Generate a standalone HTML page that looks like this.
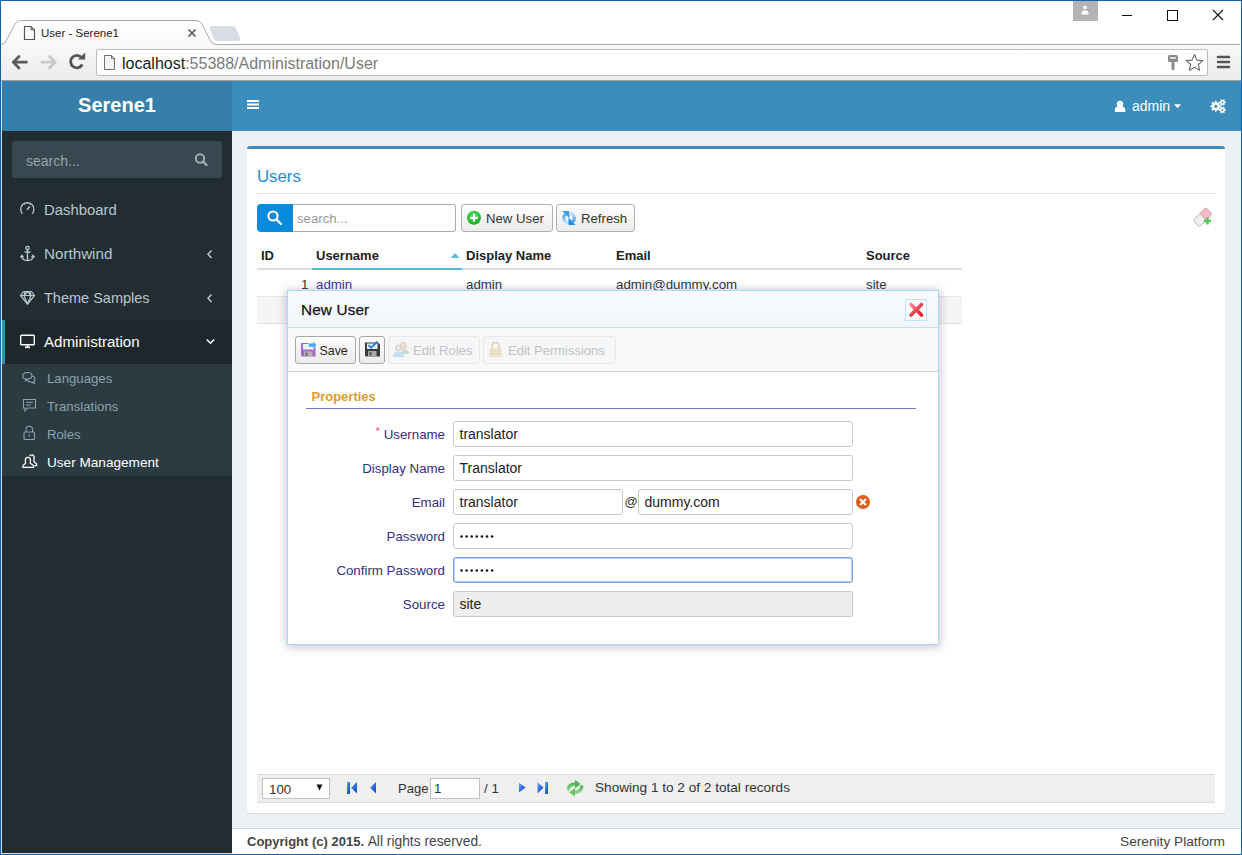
<!DOCTYPE html>
<html><head><meta charset="utf-8">
<style>
*{box-sizing:border-box;margin:0;padding:0}
html,body{width:1242px;height:855px;overflow:hidden;background:#0e64b4;font-family:"Liberation Sans",sans-serif;font-size:13px;color:#333}
.a{position:absolute}
.t{position:absolute;white-space:nowrap;line-height:1}
svg{position:absolute;overflow:visible}
/* chrome */
#tabstrip{left:1px;top:1px;width:1240px;height:44px;background:#fff}
#toolbar{left:1px;top:45px;width:1240px;height:36px;background:linear-gradient(#f8f8f8,#ececec);border-bottom:1px solid #a49f9a}
#addr{left:95px;top:4px;width:1112px;height:27px;background:#fff;border:1px solid #bdbdbd;border-radius:2px}
/* app */
#hdr-logo{left:2px;top:81px;width:230px;height:50px;background:#367fa9}
#hdr-nav{left:232px;top:81px;width:1009px;height:50px;background:#3c8dbc}
#side{left:2px;top:131px;width:230px;height:722px;background:#222d32}
#content{left:232px;top:131px;width:1009px;height:697px;background:#ecf0f5}
#footer{left:232px;top:828px;width:1009px;height:26px;background:#fff;border-top:1px solid #d2d6de}
</style></head>
<body>
<!-- ================= BROWSER CHROME ================= -->
<div id="tabstrip" class="a"></div>
<div id="toolbar" class="a"><div id="addr" class="a"></div></div>
<svg style="left:0;top:0" width="1242" height="46"><defs><linearGradient id="tabg" x1="0" y1="0" x2="0" y2="1"><stop offset="0" stop-color="#ffffff"/><stop offset="1" stop-color="#f8f8f8"/></linearGradient></defs>
  <path d="M1.5 44.5 Q5 44.5 7 39 L15 24 Q17 20.5 21 20.5 L196 20.5 Q200 20.5 202 24 L210 40 Q212 44.5 216 44.5 L1240 44.5" fill="url(#tabg)" stroke="#a8a8a8" stroke-width="1"/>
  <path d="M212 26 L232 26 Q235 26 236 28 L240 38 Q241 41 238 41 L218 41 Q215 41 214 39 L210 29 Q209 26 212 26Z" fill="#d8dde5"/>
  <path d="M24.5 26.5 L31 26.5 L34.5 30 L34.5 39.5 L24.5 39.5 Z" fill="#fff" stroke="#555" stroke-width="1.2"/>
  <path d="M31 26.5 L31 30 L34.5 30" fill="none" stroke="#555" stroke-width="1"/>
  <path d="M188.5 29.5 L195.5 36.5 M195.5 29.5 L188.5 36.5" stroke="#555" stroke-width="1.6"/>
  <rect x="1073" y="1" width="25" height="20" fill="#b3b3b3"/>
  <circle cx="1085" cy="7.3" r="1.9" fill="#fff"/>
  <path d="M1081.3 14.5 Q1081.3 10.3 1085 10.3 Q1088.7 10.3 1088.7 14.5Z" fill="#fff"/>
  <path d="M1122 15.5 L1132 15.5" stroke="#111" stroke-width="1"/>
  <rect x="1167.5" y="10.5" width="10" height="10" fill="none" stroke="#111" stroke-width="1"/>
  <path d="M1213 10 L1223 20 M1223 10 L1213 20" stroke="#111" stroke-width="1.1"/>
</svg>
<div class="t" style="left:41px;top:28px;font-size:11.5px;color:#222">User - Serene1</div>
<svg style="left:0;top:44px" width="1242" height="37">
  <!-- back -->
  <path d="M26.5 18.2 L14 18.2 M19 12.5 L13.3 18.2 L19 23.9" fill="none" stroke="#5a5a5a" stroke-width="2.8" stroke-linecap="round" stroke-linejoin="round"/>
  <!-- forward -->
  <path d="M42 18.2 L54.5 18.2 M49.5 12.5 L55.2 18.2 L49.5 23.9" fill="none" stroke="#c9c9c9" stroke-width="2.8" stroke-linecap="round" stroke-linejoin="round"/>
  <!-- reload -->
  <path d="M82.3 20.5 A6.2 6.2 0 1 1 81.5 13.5" fill="none" stroke="#555" stroke-width="2.8"/>
  <path d="M78 15.5 L85.2 15.5 L85.2 8.5 Z" fill="#555"/>
  <!-- page icon -->
  <path d="M104.5 11.5 L111.5 11.5 L114.5 14.5 L114.5 25.5 L104.5 25.5 Z" fill="#f4f4f4" stroke="#707070" stroke-width="1"/>
  <path d="M111.5 11.5 L111.5 14.5 L114.5 14.5" fill="none" stroke="#707070" stroke-width="1"/>
  <!-- key -->
  <rect x="1168" y="11" width="10" height="7" rx="1.5" fill="#8c8c8c"/>
  <rect x="1170" y="13" width="6" height="2" fill="#ddd"/>
  <rect x="1171.5" y="17" width="3" height="9" rx="1" fill="#8c8c8c"/>
  <!-- star -->
  <path d="M1194.5 10.5 L1196.9 16.1 L1202.9 16.6 L1198.3 20.5 L1199.7 26.4 L1194.5 23.3 L1189.3 26.4 L1190.7 20.5 L1186.1 16.6 L1192.1 16.1 Z" fill="#fff" stroke="#6a6a6a" stroke-width="1.1" stroke-linejoin="round"/>
  <!-- menu -->
  <path d="M1218 13 L1229 13 M1218 18 L1229 18 M1218 23 L1229 23" stroke="#555" stroke-width="2.6" stroke-linecap="round"/>
</svg>
<div class="t" style="left:122px;top:55.5px;font-size:16px;color:#1a1a1a">localhost<span style="color:#7a7a7a">:55388/Administration/User</span></div>

<!-- ================= HEADER ================= -->
<div class="a" style="left:1px;top:81px;width:1px;height:773px;background:#dcdcdc"></div><div class="a" style="left:1px;top:853px;width:231px;height:1px;background:#dcdcdc"></div>
<div id="hdr-logo" class="a"></div>
<div id="hdr-nav" class="a"></div>
<div class="t" style="left:2px;width:230px;text-align:center;top:95.2px;font-size:20px;font-weight:bold;color:#fff">Serene1</div>
<svg style="left:0;top:0" width="1242" height="131">
  <rect x="247" y="100" width="12" height="2" fill="#fff"/>
  <rect x="247" y="103.5" width="12" height="2" fill="#fff"/>
  <rect x="247" y="107" width="12" height="2" fill="#fff"/>
  <!-- user -->
  <circle cx="1120" cy="104" r="3.2" fill="#fff"/>
  <path d="M1114.8 112 L1114.8 110 Q1115 107 1118 106.6 L1122 106.6 Q1125 107 1125.3 110 L1125.3 112 Z" fill="#fff"/>
  <path d="M1174 104.3 L1181 104.3 L1177.5 108.3 Z" fill="#fff"/>
  <!-- gears -->
  <g fill="#fff" fill-rule="evenodd"><path d="M1219.80 105.42 L1221.35 105.53 L1221.35 107.07 L1219.80 107.18 L1219.25 108.51 L1220.26 109.68 L1219.18 110.76 L1218.01 109.75 L1216.68 110.30 L1216.57 111.85 L1215.03 111.85 L1214.92 110.30 L1213.59 109.75 L1212.42 110.76 L1211.34 109.68 L1212.35 108.51 L1211.80 107.18 L1210.25 107.07 L1210.25 105.53 L1211.80 105.42 L1212.35 104.09 L1211.34 102.92 L1212.42 101.84 L1213.59 102.85 L1214.92 102.30 L1215.03 100.75 L1216.57 100.75 L1216.68 102.30 L1218.01 102.85 L1219.18 101.84 L1220.26 102.92 L1219.25 104.09Z M1217.40 106.30 A1.6 1.6 0 1 0 1214.20 106.30 A1.6 1.6 0 1 0 1217.40 106.30Z"/><path d="M1224.90 101.69 L1225.94 101.76 L1225.94 103.04 L1224.90 103.11 L1224.31 104.12 L1224.77 105.06 L1223.67 105.70 L1223.08 104.83 L1221.92 104.83 L1221.33 105.70 L1220.23 105.06 L1220.69 104.12 L1220.10 103.11 L1219.06 103.04 L1219.06 101.76 L1220.10 101.69 L1220.69 100.68 L1220.23 99.74 L1221.33 99.10 L1221.92 99.97 L1223.08 99.97 L1223.67 99.10 L1224.77 99.74 L1224.31 100.68Z M1223.40 102.40 A0.9 0.9 0 1 0 1221.60 102.40 A0.9 0.9 0 1 0 1223.40 102.40Z"/><path d="M1224.90 109.29 L1225.94 109.36 L1225.94 110.64 L1224.90 110.71 L1224.31 111.72 L1224.77 112.66 L1223.67 113.30 L1223.08 112.43 L1221.92 112.43 L1221.33 113.30 L1220.23 112.66 L1220.69 111.72 L1220.10 110.71 L1219.06 110.64 L1219.06 109.36 L1220.10 109.29 L1220.69 108.28 L1220.23 107.34 L1221.33 106.70 L1221.92 107.57 L1223.08 107.57 L1223.67 106.70 L1224.77 107.34 L1224.31 108.28Z M1223.40 110.00 A0.9 0.9 0 1 0 1221.60 110.00 A0.9 0.9 0 1 0 1223.40 110.00Z"/></g>
</svg>
<div class="t" style="left:1132px;top:99.3px;font-size:14px;color:#fff">admin</div>

<!-- ================= SIDEBAR ================= -->
<div id="side" class="a"></div>
<div class="a" style="left:12px;top:141px;width:210px;height:37px;background:#374850;border-radius:3px"></div>
<div class="t" style="left:26px;top:153.5px;font-size:14px;color:#97a3a8">search...</div>
<svg style="left:0;top:0" width="232" height="860">
  <!-- search magnifier -->
  <circle cx="200" cy="158.5" r="4.2" fill="none" stroke="#a3acb0" stroke-width="2"/>
  <path d="M203 161.5 L206.5 165" stroke="#a3acb0" stroke-width="2.4" stroke-linecap="round"/>
  <!-- active item -->
  <rect x="2" y="320" width="230" height="44" fill="#1e282c"/>
  <rect x="2" y="320" width="3" height="44" fill="#3c8dbc"/>
  <rect x="2" y="364" width="230" height="112" fill="#2c3b41"/>
  <!-- dashboard icon -->
  <g fill="none" stroke="#b8c7ce" stroke-width="1.3">
    <path d="M22.5 213.8 A6.6 6.6 0 1 1 32.1 213.8"/>
    <path d="M26.8 209.8 L30 206.5" stroke-width="1.5"/>
    <path d="M24.5 204.3 L25 205 M27.3 203 L27.3 204 M30.1 204.3 L29.6 205" stroke-width="1"/>
  </g>
  <!-- anchor -->
  <g fill="none" stroke="#b8c7ce" stroke-width="1.4">
    <circle cx="27.5" cy="248" r="1.6"/>
    <path d="M27.5 249.6 L27.5 260.5"/>
    <path d="M24.5 252 L30.5 252"/>
    <path d="M21.5 256 Q22 260.5 27.5 260.5 Q33 260.5 33.5 256"/>
    <path d="M20.5 257.5 L22 255.5 L23.5 257.5"/>
    <path d="M31.5 257.5 L33 255.5 L34.5 257.5"/>
  </g>
  <!-- diamond -->
  <g fill="none" stroke="#b8c7ce" stroke-width="1.2" stroke-linejoin="round">
    <path d="M23.5 291.5 L31.5 291.5 L34.5 295.5 L27.5 304 L20.5 295.5 Z"/>
    <path d="M20.5 295.5 L34.5 295.5 M25 291.5 L24 295.5 L27.5 304 L31 295.5 L30 291.5 M24 295.5 L27.5 291.5 L31 295.5"/>
  </g>
  <!-- chevrons -->
  <path d="M211.5 250.5 L208 254.3 L211.5 258" fill="none" stroke="#b8c7ce" stroke-width="1.5"/>
  <path d="M211.5 294.5 L208 298.3 L211.5 302" fill="none" stroke="#b8c7ce" stroke-width="1.5"/>
  <path d="M206.8 339.5 L210.5 343.2 L214.2 339.5" fill="none" stroke="#fff" stroke-width="1.6"/>
  <!-- desktop -->
  <rect x="20.7" y="335.2" width="13.6" height="9.6" rx="0.8" fill="none" stroke="#fff" stroke-width="1.4"/>
  <path d="M25 347.3 L30 347.3" stroke="#fff" stroke-width="1.6"/>
  <path d="M27.5 345 L27.5 347" stroke="#fff" stroke-width="1.6"/>
  <!-- comments -->
  <g fill="none" stroke="#8aa4af" stroke-width="1.1">
    <path d="M26 379 Q22.8 379 22.8 376 Q22.8 372.5 27.5 372.5 Q32 372.5 32 375.5 Q32 378.5 28 378.7 L25.5 380.5 Z"/>
    <path d="M32.5 376 Q35 376.8 35 379 Q35 381 33.5 381.5 L34.5 383.5 L31 382 Q28 382 27.5 380"/>
  </g>
  <!-- commenting -->
  <g fill="none" stroke="#8aa4af" stroke-width="1.1">
    <path d="M23.5 399.5 L35.5 399.5 L35.5 408 L27.5 408 L25 410.8 L25 408 L23.5 408 Z"/>
    <path d="M26 402.3 L33 402.3 M26 405 L31 405" stroke-width="1"/>
  </g>
  <!-- lock -->
  <g fill="none" stroke="#8aa4af" stroke-width="1.1">
    <rect x="24" y="432" width="10.5" height="7.5" rx="1"/>
    <path d="M26 432 L26 429.5 Q26 426.3 29.2 426.3 Q32.5 426.3 32.5 429.5 L32.5 432"/>
    <path d="M29.2 434.5 L29.2 436.5"/>
  </g>
  <!-- user mgmt -->
  <g fill="none" stroke="#fff" stroke-width="1.25" stroke-linejoin="round">
    <path d="M25.6 463.3 L25.3 460.5 Q25.3 457.4 27.9 457.4 Q30.5 457.4 30.5 460.5 L30.2 463.3 L33.2 465.3 Q33.8 465.8 33.7 467.3 L22.8 467.3 Q22.7 465.8 23.3 465.3 Z"/>
    <path d="M29.6 456.2 Q30.2 454.9 31.6 454.9 Q34.2 454.9 34.2 458 L33.8 461.6 L36.2 463.6 Q36.8 464.1 36.7 465.6 L34.6 465.6"/>
  </g>
</svg>
<div class="t" style="left:44px;top:202.5px;font-size:14.9px;color:#b8c7ce">Dashboard</div>
<div class="t" style="left:44px;top:246.3px;font-size:15.2px;color:#b8c7ce">Northwind</div>
<div class="t" style="left:44px;top:290.7px;font-size:14.5px;color:#b8c7ce">Theme Samples</div>
<div class="t" style="left:44px;top:334.3px;font-size:15.1px;color:#fff">Administration</div>
<div class="t" style="left:47px;top:372.3px;font-size:13.2px;color:#8aa4af">Languages</div>
<div class="t" style="left:47px;top:400.3px;font-size:13.2px;color:#8aa4af">Translations</div>
<div class="t" style="left:47px;top:428.3px;font-size:13.2px;color:#8aa4af">Roles</div>
<div class="t" style="left:47px;top:456.3px;font-size:13.6px;color:#fff">User Management</div>

<!-- ================= CONTENT ================= -->
<div id="content" class="a"></div>
<div id="footer" class="a"></div>
<div class="a" style="left:247px;top:146px;width:978px;height:667px;background:#fff;border-top:3px solid #3c8dbc;border-radius:3px;box-shadow:0 1px 1px rgba(0,0,0,0.1)"></div>
<div class="t" style="left:257px;top:168.5px;font-size:16.8px;color:#1f8dd6">Users</div>
<div class="a" style="left:257px;top:193px;width:958px;height:1px;background:#e3e3e3"></div>
<!-- quick search -->
<div class="a" style="left:257px;top:204px;width:36px;height:28px;background:#098bdb;border-radius:4px 0 0 4px"></div>
<svg style="left:0;top:0" width="1242" height="260">
  <circle cx="273" cy="216" r="4.6" fill="none" stroke="#fff" stroke-width="2"/>
  <path d="M276.5 219.5 L281 224" stroke="#fff" stroke-width="2.4" stroke-linecap="round"/>
</svg>
<div class="a" style="left:293px;top:204px;width:163px;height:28px;background:#fff;border:1px solid #a9a9a9;border-left:none;border-radius:0 3px 3px 0"></div>
<div class="t" style="left:297px;top:212px;font-size:13.2px;color:#999">search...</div>
<!-- buttons -->
<div class="a" style="left:461px;top:204px;width:92px;height:28px;background:linear-gradient(#fdfdfd,#ececec);border:1px solid #b0b0b0;border-radius:3px"></div>
<div class="t" style="left:486px;top:212px;font-size:13.2px;color:#333">New User</div>
<div class="a" style="left:556px;top:204px;width:79px;height:28px;background:linear-gradient(#fdfdfd,#ececec);border:1px solid #b0b0b0;border-radius:3px"></div>
<div class="t" style="left:581px;top:212px;font-size:13.2px;color:#333">Refresh</div>
<svg style="left:0;top:0" width="1242" height="260">
  <defs>
    <radialGradient id="gg" cx="0.45" cy="0.3" r="0.75"><stop offset="0" stop-color="#4ee05a"/><stop offset="1" stop-color="#12a822"/></radialGradient>
    <linearGradient id="rb1" x1="0" y1="0" x2="0" y2="1"><stop offset="0" stop-color="#4aa2e8"/><stop offset="1" stop-color="#c4e4fa"/></linearGradient><linearGradient id="rb2" x1="0" y1="0" x2="0" y2="1"><stop offset="0" stop-color="#c4e4fa"/><stop offset="1" stop-color="#3a9ae8"/></linearGradient>
  </defs>
  <circle cx="474" cy="217.8" r="7" fill="url(#gg)"/>
  <path d="M474 213.8 L474 221.8 M470 217.8 L478 217.8" stroke="#fff" stroke-width="2.2"/>
  <!-- refresh icon -->
  <path d="M569 223.2 A5.2 5.2 0 0 1 565.3 214.3" fill="none" stroke="url(#rb1)" stroke-width="3"/>
  <path d="M562.3 211 L569.5 211 L569.5 218.2 Z" fill="#3d9ae6"/>
  <path d="M569 212.8 A5.2 5.2 0 0 1 572.7 221.7" fill="none" stroke="url(#rb2)" stroke-width="3"/>
  <path d="M568.5 217.8 L568.5 225 L575.7 225 Z" fill="#1d8fe8"/>
  <!-- eraser -->
  <g transform="translate(0 0.8) rotate(-45 1203 216)">
    <rect x="1193.5" y="211.5" width="11" height="9" rx="2" fill="#f0f0f0" stroke="#c4c4c4" stroke-width="1"/>
    <rect x="1203" y="211.5" width="8.5" height="9" rx="2" fill="#f3bccb" stroke="#e6a2b6" stroke-width="1"/>
  </g>
  <path d="M1207.5 217.5 L1207.5 224.5 M1204 221 L1211 221" stroke="#4cc94c" stroke-width="2.4"/>
</svg>

<!-- grid -->
<div class="a" style="left:257px;top:268px;width:705px;height:2px;background:#dddddd"></div>
<div class="a" style="left:312px;top:268px;width:150px;height:2px;background:#52b9dd"></div>
<svg style="left:0;top:0" width="1242" height="300"><path d="M450.5 258 L455 253 L459.5 258 Z" fill="#5bbfe0"/></svg>
<div class="t" style="left:261px;top:249px;font-size:13px;font-weight:bold;color:#222">ID</div>
<div class="t" style="left:316px;top:249px;font-size:13px;font-weight:bold;color:#222">Username</div>
<div class="t" style="left:466px;top:249px;font-size:13px;font-weight:bold;color:#222">Display Name</div>
<div class="t" style="left:616px;top:249px;font-size:13px;font-weight:bold;color:#222">Email</div>
<div class="t" style="left:866px;top:249px;font-size:13px;font-weight:bold;color:#222">Source</div>
<div class="a" style="left:257px;top:296px;width:705px;height:1px;background:#e6e6e6"></div>
<div class="a" style="left:257px;top:297px;width:705px;height:27px;background:#f5f5f5;border-bottom:1px solid #e0e0e0"></div>
<div class="t" style="left:301px;top:277.5px;font-size:13.3px;color:#333">1</div>
<div class="t" style="left:316px;top:277.5px;font-size:13.3px;color:#3535b0">admin</div>
<div class="t" style="left:466px;top:277.5px;font-size:13.3px;color:#333">admin</div>
<div class="t" style="left:616px;top:277.5px;font-size:13.3px;color:#333">admin@dummy.com</div>
<div class="t" style="left:866px;top:277.5px;font-size:13.3px;color:#333">site</div>

<!-- pager -->
<div class="a" style="left:257px;top:774px;width:958px;height:29px;background:#efefef;border-top:1px solid #dcdcdc;border-bottom:1px solid #dcdcdc"></div>
<div class="a" style="left:262px;top:778px;width:68px;height:21px;background:#fff;border:1px solid #c0c0c0"></div>
<div class="t" style="left:269px;top:783px;font-size:13.3px;color:#333">100</div>
<svg style="left:0;top:0" width="1242" height="855">
  <path d="M316.5 784.5 L322.5 784.5 L319.5 790.5 Z" fill="#111"/>
  <defs><linearGradient id="pg" x1="0" y1="0" x2="1" y2="1"><stop offset="0" stop-color="#7fb0f5"/><stop offset="0.5" stop-color="#2d6ee0"/><stop offset="1" stop-color="#1a48b8"/></linearGradient></defs>
  <!-- first -->
  <rect x="347" y="782" width="3" height="12" fill="url(#pg)"/>
  <path d="M357 782 L357 793.5 L351 787.8 Z" fill="url(#pg)"/>
  <!-- prev -->
  <path d="M376 782 L376 793.5 L370 787.8 Z" fill="url(#pg)"/>
  <!-- next -->
  <path d="M519 782.5 L519 792.5 L525.5 787.5 Z" fill="url(#pg)"/>
  <!-- last -->
  <path d="M537.5 782 L537.5 793.5 L543.5 787.8 Z" fill="url(#pg)"/>
  <rect x="545" y="782" width="3" height="12" fill="url(#pg)"/>
  <!-- green refresh -->
  <defs><linearGradient id="gr" x1="0" y1="0" x2="0" y2="1"><stop offset="0" stop-color="#5cb85c"/><stop offset="1" stop-color="#8fd08f"/></linearGradient></defs>
  <path d="M568.3 789.2 Q568.8 784 575.5 784" fill="none" stroke="url(#gr)" stroke-width="3.4" stroke-linecap="round"/>
  <path d="M575 779.8 L580.8 784.1 L575 788.4 Z" fill="#58b058"/>
  <path d="M581.7 786.6 Q581.2 792.2 574.5 792.2" fill="none" stroke="url(#gr)" stroke-width="3.4" stroke-linecap="round"/>
  <path d="M575 788 L569.2 792.3 L575 796.6 Z" fill="#6cc06c"/>
</svg>
<div class="t" style="left:398px;top:782px;font-size:13px;color:#333">Page</div>
<div class="a" style="left:430px;top:778px;width:50px;height:21px;background:#fff;border:1px solid #c0c0c0"></div>
<div class="t" style="left:434px;top:782px;font-size:13.3px;color:#333">1</div>
<div class="t" style="left:484px;top:782px;font-size:13.3px;color:#333">/ 1</div>
<div class="t" style="left:595px;top:781px;font-size:13.6px;color:#333">Showing 1 to 2 of 2 total records</div>

<!-- footer -->
<div class="t" style="left:247px;top:834.5px;font-size:13px;color:#444"><b>Copyright (c) 2015.</b> <span style="font-size:13.8px">All rights reserved.</span></div>
<div class="t" style="left:1000px;width:225px;text-align:right;top:834.5px;font-size:13.7px;color:#444">Serenity Platform</div>

<!-- ================= DIALOG ================= -->
<div class="a" style="left:287px;top:290px;width:652px;height:355px;background:#fff;border:1px solid #a8d9f5;box-shadow:0 1px 9px 1px rgba(80,70,120,0.33)"></div>
<div class="a" style="left:288px;top:291px;width:650px;height:37px;background:linear-gradient(#fafcfe,#f0f6fb);border-bottom:1px solid #b9e0f6"></div>
<div class="t" style="left:301px;top:301.7px;font-size:15.3px;color:#111;letter-spacing:0.15px;-webkit-text-stroke:0.25px #111">New User</div>
<div class="a" style="left:905px;top:299px;width:22px;height:22px;border:1px solid #bde3f7;background:#f7fbfe"></div>
<svg style="left:0;top:0" width="1242" height="855">
  <defs>
    <linearGradient id="xr" x1="0" y1="0" x2="1" y2="1"><stop offset="0" stop-color="#ff8a94"/><stop offset="0.5" stop-color="#f04452"/><stop offset="1" stop-color="#e81c2a"/></linearGradient>
  </defs>
  <path d="M911 304.5 L921.5 315 M921.5 304.5 L911 315" stroke="url(#xr)" stroke-width="3.6" stroke-linecap="round"/>
</svg>
<!-- dialog toolbar -->
<div class="a" style="left:288px;top:328px;width:650px;height:44px;background:#f7f9fb;border-bottom:1px solid #cfcfcf"></div>
<div class="a" style="left:295px;top:336px;width:61px;height:28px;background:linear-gradient(#fdfdfd,#ebebeb);border:1px solid #a8a8a8;border-radius:3px"></div>
<div class="a" style="left:359px;top:336px;width:26px;height:28px;background:linear-gradient(#fdfdfd,#ebebeb);border:1px solid #a8a8a8;border-radius:3px"></div>
<div class="a" style="left:388px;top:336px;width:92px;height:28px;background:#f4f6f8;border:1px solid #e6e8ea;border-radius:3px"></div>
<div class="a" style="left:483px;top:336px;width:133px;height:28px;background:#f4f6f8;border:1px solid #e6e8ea;border-radius:3px"></div>
<div class="t" style="left:319.5px;top:344.5px;font-size:12.4px;color:#222">Save</div>
<div class="t" style="left:413px;top:343.6px;font-size:13px;color:#c2c2c2">Edit Roles</div>
<div class="t" style="left:508px;top:343.6px;font-size:13px;color:#c2c2c2">Edit Permissions</div>
<svg style="left:0;top:0" width="1242" height="855">
  <!-- save icon (purple floppy with arrow) -->
  <path d="M301 343 L313.5 343 L315.5 345 L315.5 356.5 L302 356.5 L301 355.5 Z" fill="#a665c8"/>
  <rect x="303" y="344" width="10.5" height="5.5" fill="#e6f2f2"/>
  <rect x="304" y="351.5" width="8.5" height="5" fill="#b4b4b4"/>
  <rect x="305.5" y="352.5" width="2" height="3.5" fill="#7a5a8a"/>
  <path d="M308.5 343.3 L312.8 343.3 L312.8 341 L316.8 345.2 L312.8 349.4 L312.8 347.1 L308.5 347.1 Z" fill="#4aa6ee" stroke="#fff" stroke-width="0.6"/>
  <!-- save-close icon -->
  <path d="M365 342.5 L378 342.5 L380 344.5 L380 356.5 L366 356.5 L365 355.5 Z" fill="#3c3c3c"/>
  <rect x="367" y="343.5" width="10.5" height="5.5" fill="#e8f2f2"/>
  <rect x="368" y="351" width="8.5" height="5.5" fill="#a8a8a8"/>
  <rect x="369.5" y="352" width="2" height="3.5" fill="#555"/>
  <path d="M368.5 345 L371 347.8 L377.5 341.5" fill="none" stroke="#1f7ae6" stroke-width="1.8"/>
  <!-- edit roles icon (faded people) -->
  <g opacity="0.5">
    <path d="M401 354 Q401 349.5 405 349.5 Q409 349.5 409 354 Z" fill="#8ccf8c"/>
    <ellipse cx="403.5" cy="345.8" rx="3" ry="3.8" fill="#e9c8b0" stroke="#c89880" stroke-width="0.8"/>
    <path d="M393 357 Q393 351.5 398.5 351.5 Q404 351.5 404 357 Z" fill="#9cc6ec"/>
    <circle cx="398.3" cy="348" r="2.8" fill="#f0dcc8" stroke="#9a9a9a" stroke-width="0.9"/>
  </g>
  <!-- edit permissions icon (faded lock) -->
  <g opacity="0.38">
    <path d="M492 348.5 L492 346 Q492 342.5 495.5 342.5 Q499 342.5 499 346 L499 348.5" fill="none" stroke="#b89850" stroke-width="1.6"/>
    <rect x="489.5" y="348" width="12" height="9" rx="0.8" fill="#e8c880"/>
    <path d="M489.5 350.8 L501.5 350.8 M489.5 353.6 L501.5 353.6" stroke="#c8a050" stroke-width="0.9"/>
  </g>
</svg>

<!-- properties -->
<div class="t" style="left:311.5px;top:390px;font-size:13px;font-weight:bold;color:#e09a2e">Properties</div>
<div class="a" style="left:306px;top:408px;width:610px;height:1px;background:#7179c8"></div>

<!-- labels -->
<div class="t" style="left:300px;width:145px;text-align:right;top:428px;font-size:13.3px;color:#2f2f84">Username</div>
<div class="t" style="left:375.5px;top:426px;font-size:11px;color:#f0507a">*</div>
<div class="t" style="left:300px;width:145px;text-align:right;top:462px;font-size:13.3px;color:#2f2f84">Display Name</div>
<div class="t" style="left:300px;width:145px;text-align:right;top:496px;font-size:13.3px;color:#2f2f84">Email</div>
<div class="t" style="left:300px;width:145px;text-align:right;top:530px;font-size:13.3px;color:#2f2f84">Password</div>
<div class="t" style="left:300px;width:145px;text-align:right;top:564px;font-size:13.3px;color:#2f2f84">Confirm Password</div>
<div class="t" style="left:300px;width:145px;text-align:right;top:598px;font-size:13.3px;color:#2f2f84">Source</div>

<!-- inputs -->
<div class="a" style="left:453px;top:421px;width:400px;height:26px;border:1px solid #c8c8c8;border-radius:3px;background:#fff"></div>
<div class="a" style="left:453px;top:455px;width:400px;height:26px;border:1px solid #c8c8c8;border-radius:3px;background:#fff"></div>
<div class="a" style="left:453px;top:489px;width:170px;height:26px;border:1px solid #c8c8c8;border-radius:3px;background:#fff"></div>
<div class="a" style="left:638px;top:489px;width:215px;height:26px;border:1px solid #c8c8c8;border-radius:3px;background:#fff"></div>
<div class="a" style="left:453px;top:523px;width:400px;height:26px;border:1px solid #c8c8c8;border-radius:3px;background:#fff"></div>
<div class="a" style="left:453px;top:557px;width:400px;height:26px;border:1px solid #6f9fe6;border-radius:3px;background:#fff;box-shadow:inset 0 0 0 1px #b9d2f3"></div>
<div class="a" style="left:453px;top:591px;width:400px;height:26px;border:1px solid #c8c8c8;border-radius:3px;background:#eeeeee"></div>
<div class="t" style="left:459.5px;top:427px;font-size:14px;color:#222">translator</div>
<div class="t" style="left:459.5px;top:461px;font-size:14px;color:#222">Translator</div>
<div class="t" style="left:459.5px;top:495px;font-size:14px;color:#222">translator</div>
<div class="t" style="left:624.5px;top:495px;font-size:13px;color:#333">@</div>
<div class="t" style="left:644.5px;top:495px;font-size:14px;color:#222">dummy.com</div>
<div class="t" style="left:459.5px;top:597px;font-size:14px;color:#222">site</div>
<svg style="left:0;top:0" width="1242" height="855">
  <g fill="#111"><circle cx="461.5" cy="536.5" r="1.25"/><circle cx="466.6" cy="536.5" r="1.25"/><circle cx="471.7" cy="536.5" r="1.25"/><circle cx="476.8" cy="536.5" r="1.25"/><circle cx="481.9" cy="536.5" r="1.25"/><circle cx="487.0" cy="536.5" r="1.25"/><circle cx="492.1" cy="536.5" r="1.25"/><circle cx="461.5" cy="570.5" r="1.25"/><circle cx="466.6" cy="570.5" r="1.25"/><circle cx="471.7" cy="570.5" r="1.25"/><circle cx="476.8" cy="570.5" r="1.25"/><circle cx="481.9" cy="570.5" r="1.25"/><circle cx="487.0" cy="570.5" r="1.25"/><circle cx="492.1" cy="570.5" r="1.25"/></g>
  <circle cx="863" cy="502" r="7" fill="#e35a12"/>
  <path d="M860 499 L866 505 M866 499 L860 505" stroke="#fff" stroke-width="2.2"/>
</svg>
</body></html>
